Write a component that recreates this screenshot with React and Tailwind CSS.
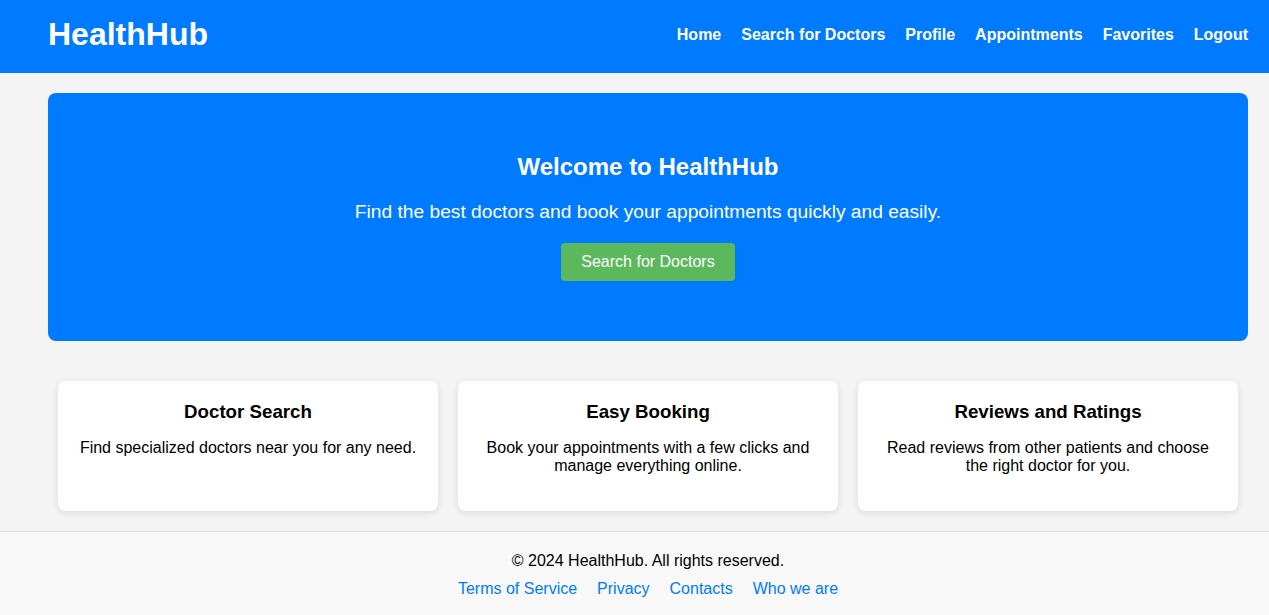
export default function App() {
  const nav = ["Home", "Search for Doctors", "Profile", "Appointments", "Favorites", "Logout"];
  const cards = [
    { t: "Doctor Search", d: "Find specialized doctors near you for any need." },
    { t: "Easy Booking", d: "Book your appointments with a few clicks and manage everything online." },
    { t: "Reviews and Ratings", d: "Read reviews from other patients and choose the right doctor for you." },
  ];
  const links = ["Terms of Service", "Privacy", "Contacts", "Who we are"];
  return (
    <div className="min-h-[615px] bg-[#f4f4f4] text-black font-['Liberation_Sans',Arial,sans-serif] flex flex-col">
      <header className="bg-[#007bff] h-[73px] text-white">
        <div className="w-[1200px] ml-[48px] h-full flex items-center justify-between pb-[4px]">
          <h1 className="text-[32px] font-bold leading-[37px]">HealthHub</h1>
          <nav className="flex gap-[20px] text-[16px] font-bold">
            {nav.map((n) => (
              <a key={n} href="#" className="text-white">{n}</a>
            ))}
          </nav>
        </div>
      </header>
      <main className="flex-1">
        <section className="w-[1200px] ml-[48px] mt-[20px] h-[248px] bg-[#007bff] rounded-[8px] text-white text-center pt-[60px]">
          <h2 className="text-[24px] font-bold leading-[28px]">Welcome to HealthHub</h2>
          <p className="text-[19.2px] leading-[22px] mt-[20px]">Find the best doctors and book your appointments quickly and easily.</p>
          <button className="mt-[20px] bg-[#5cb85c] text-white text-[16px] leading-[18px] px-[20px] py-[10px] rounded-[4px]">Search for Doctors</button>
        </section>
        <section className="w-[1200px] ml-[48px] mt-[40px] flex">
          {cards.map((c) => (
            <div key={c.t} className="w-[380px] mx-[10px] bg-white rounded-[8px] shadow-[0_2px_8px_rgba(0,0,0,0.1)] px-[20px] pt-[20px] pb-[20px] text-center">
              <h3 className="text-[18.72px] font-bold leading-[22px]">{c.t}</h3>
              <p className="text-[16px] leading-[18px] mt-[16px] mb-[16px]">{c.d}</p>
            </div>
          ))}
        </section>
      </main>
      <footer className="mt-[20px] bg-[#f8f8f8] border-t border-[#dddddd] pt-[20px] pb-[18px] text-[16px] leading-[18px]">
        <div className="w-[1200px] ml-[48px] text-center">
          <p>© 2024 HealthHub. All rights reserved.</p>
          <div className="mt-[10px] flex justify-center gap-[20px]">
            {links.map((l) => (
              <a key={l} href="#" className="text-[#007bff]">{l}</a>
            ))}
          </div>
        </div>
      </footer>
    </div>
  );
}
